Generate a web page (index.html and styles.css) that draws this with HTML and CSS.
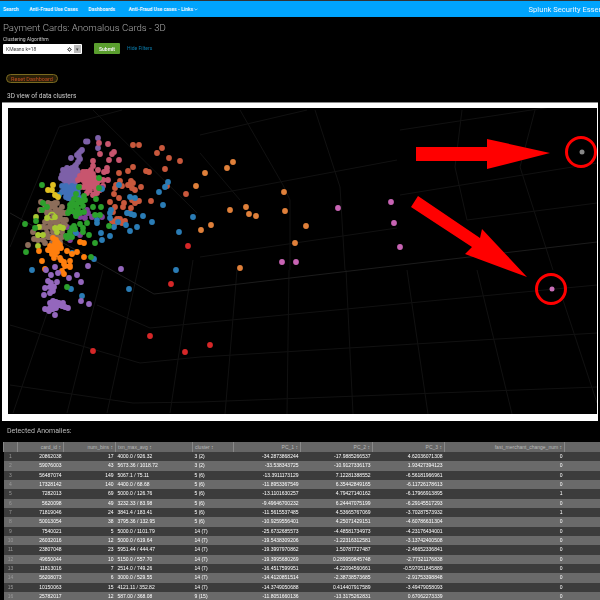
FILE: index.html
```html
<!DOCTYPE html>
<html>
<head lang="en">
    <meta charset="UTF-8">
    <title>Payment Cards: Anomalous Cards - 3D</title>
    <link rel="stylesheet" href="styles.css">
</head>
<body>
<div class="nav">
    <a>Search</a>
    <a>Anti-Fraud Use Cases</a>
    <a>Dashboards</a>
    <a>Anti-Fraud Use cases - Links <svg class="caret" viewBox="0 0 6 4"><path d="M.7.7 3 3 5.3.7"/></svg></a>
    <span class="brand">Splunk Security Essentials</span>
</div>
<h1 class="title">Payment Cards: Anomalous Cards - 3D</h1>
<div class="filters">
    <div class="field">
        <label>Clustering Algorithm</label>
        <div class="select">
            <span class="select-text">KMeans k=18</span>
            <svg class="gear" viewBox="0 0 10 10"><circle cx="5" cy="5" r="2.6"/><path d="M5 .5v2M5 7.500v2M.5 5h2M7.500 5h2M1.800 1.800l1.400 1.400M6.800 6.800l1.400 1.400M1.800 8.200l1.400-1.400M6.800 3.200l1.400-1.400"/></svg>
            <span class="select-arrow">▾</span>
        </div>
    </div>
    <button class="submit">Submit</button>
    <a class="hide">Hide Filters</a>
</div>
<button class="reset">Reset Dashboard</button>
<h2 class="panel-title">3D view of data clusters</h2>
<div class="plot-frame">
    <svg class="plot" viewBox="8 108 589 306">
        <g class="grid">
            <path d="M122 110 59 127 10 247M93 110 197 213M240 110 283 185 290 200 290 270M315 110 340 187 345 270M462 110 455 167 467 220M535 110 520 167 553 270"/>
            <path d="M200 135 307 110M200 197 397 160M200 257 397 228M400 195 597 163M467 220 597 203M400 130 597 100M200 153 240 200"/>
            <path d="M97 305 150 328 200 323 597 285M10 325 140 363 200 357 597 333M10 385 133 403 200 402 597 387"/>
            <path d="M13 413 47 313M67 413 103 270M107 413 140 260M170 413 193 260M225 414 237 270M287 414 289 270M353 414 346 270M428 414 407 270M512 414 477 270M597 403 563 300"/>
            <path class="axis" d="M10 213 154 294 597 242"/>
        </g>
        <path class="pts" stroke="#7d60a8" d="M86 141.500h0M87.500 141.500h0M98 138h0M98 148h0M81 151h0M79 153h0M71 158h0M78 162h0M80 159h0M76 165h0M67 168h0M65 172h0M62 175h0M70 173h0M73 177h0M68 178h0M72 172h0M77 170h0M65 177h0M75 182h0M67 182h0M70 185h0M63 170h0M74 187h0M72 168h0M66 175h0M77 176h0M64 173h0M67 172h0M70 170h0M73 170h0M75 173h0M68 175h0M71 176h0M74 175h0M64 180h0M68 180h0M72 180h0M76 180h0M70 182h0M73 184h0M66 184h0M61 178h0M78 172h0M75 166h0M79 157h0M77 155h0M82 150h0"/>
        <path class="pts" stroke="#c8556e" d="M99 143h0M108 144h0M114 152h0M112 154h0M109 160h0M100 154h0M93 161h0M119 160h0M93 166h0M98 170h0M107 168h0M107 171h0M83 172h0M87 173h0M80 176h0M89 175h0M83 180h0M93 174h0M103 180h0M108 180h0M97 183h0M92 183h0M85 183h0M80 187h0M88 188h0M93 195h0M100 190h0M103 186h0M87 193h0M97 193h0M90 190h0M78 180h0M85 176h0M95 178h0M85 172h0M90 178h0M88 180h0M92 178h0M88 184h0M94 186h0M98 187h0M96 190h0M91 187h0M84 187h0M82 178h0M88 172h0M91 170h0M100 180h0M104 172h0"/>
        <path class="pts" stroke="#c9583c" d="M133 145h0M139 145h0M157 153h0M162 148h0M169 158h0M180 161h0M119 173h0M128 171h0M133 167h0M146 171h0M149 172h0M165 169h0M167 186h0M186 194h0M120 181h0M131 181h0M116 185h0M115 188h0M122 186h0M133 183h0M141 187h0M128 185h0M132 188h0M135 190h0M114 194h0M119 198h0M110 202h0M151 201h0M124 203h0M132 200h0M139 201h0M135 203h0M115 207h0M123 207h0M131 208h0M113 212h0M128 213h0M117 219h0M120 219h0M125 221h0M112 221h0M115 223h0M122 223h0"/>
        <path class="pts" stroke="#4070b8" d="M66 186h0M70 188h0M74 190h0M66 192h0M70 194h0M75 196h0M68 198h0M72 200h0M78 193h0M64 189h0M80 198h0M62 186h0M72 186h0M76 187h0M62 192h0M66 197h0M70 198h0M74 194h0M78 189h0M72 192h0M68 190h0"/>
        <path class="pts" stroke="#7d3f98" d="M75 213h0M80 217h0M88 213h0M92 217h0M102 217h0M87 210h0M67 227h0M75 232h0M80 235h0M70 240h0M85 218h0M102 188h0"/>
        <path class="pts" stroke="#2a7cb5" d="M168 182h0M165 187h0M159 192h0M163 205h0M193 217h0M179 232h0M152 222h0M143 216h0M137 227h0M130 231h0M126 225h0M114 227h0M110 236h0M101 233h0M102 240h0M111 210h0M110 213h0M119 185h0M130 197h0M135 198h0M127 213h0M131 214h0M134 215h0M110 218h0M97 220h0M97 223h0M118 222h0M72 253h0M94 259h0M76 233h0M59 195h0M102 189h0M32 270h0M176 270h0M129 289h0M71 289h0M82 296h0"/>
        <path class="pts" stroke="#8c6d5a" d="M41 202h0M50 207h0M57 203h0M62 207h0M53 213h0M60 215h0M63 220h0M50 222h0M57 225h0M62 232h0M58 237h0M53 232h0M47 233h0M43 240h0M48 237h0M33 232h0M28 245h0M34 239h0M58 220h0M65 213h0M55 208h0M47 213h0M60 242h0M52 243h0M56 210h0M60 210h0M53 217h0M48 218h0M45 205h0M48 203h0M52 204h0M55 203h0M45 210h0M50 212h0M58 212h0M62 213h0M45 222h0M50 226h0M46 228h0M54 222h0M60 225h0M65 225h0M42 227h0M55 235h0M50 237h0M45 243h0M38 240h0M52 228h0M62 237h0M66 220h0M40 210h0"/>
        <path class="pts" stroke="#a8c832" d="M36 217h0M55 217h0M47 218h0M39 227h0M55 228h0M60 227h0M38 235h0M38 246h0M57 232h0M63 228h0M43 235h0"/>
        <circle class="ring" cx="52" cy="216" r="3.500"/>
        <path class="pts" stroke="#e0c020" d="M53 185h0M48 190h0M52 190h0M55 195h0M58 197h0"/>
        <path class="pts" stroke="#2ca02c" d="M42 185h0M99 178h0M79 187h0M99 188h0M76 194h0M84 196h0M96 199h0M72 203h0M80 202h0M83 206h0M70 208h0M75 212h0M80 213h0M93 207h0M101 207h0M95 215h0M100 215h0M87 223h0M74 226h0M83 228h0M70 232h0M89 235h0M67 238h0M72 237h0M95 243h0M91 257h0M109 226h0M26 252h0M25 224h0M36 221h0M43 203h0M42 210h0M47 207h0M35 228h0M83 232h0M67 287h0M73 206h0M78 209h0M68 213h0M75 205h0M70 205h0M72 211h0M77 207h0M82 201h0M85 200h0M78 200h0M74 199h0M69 211h0M76 216h0M84 212h0M66 236h0M70 235h0M75 229h0M80 224h0M72 228h0"/>
        <path class="pts" stroke="#ff7f0e" d="M39 251h0M42 261h0M50 250h0M52 254h0M55 255h0M60 258h0M64 262h0M70 261h0M67 251h0M72 254h0M77 252h0M84 257h0M80 242h0M84 243h0M53 238h0M55 243h0M57 248h0M52 247h0M58 243h0M65 266h0M70 266h0M45 269h0M61 248h0M61 260h0M64 264h0M70 267h0M62 271h0M64 274h0M55 247h0M53 251h0M50 246h0M57 252h0M54 258h0M48 250h0M60 245h0M56 240h0"/>
        <path class="pts" stroke="#9467bd" d="M46 270h0M51 275h0M58 273h0M55 267h0M48 281h0M51 283h0M57 282h0M69 278h0M77 275h0M81 282h0M88 266h0M121 269h0M45 288h0M50 287h0M54 287h0M53 291h0M50 293h0M44 295h0M81 301h0M89 304h0M45 309h0M49 311h0M55 315h0M68 308h0M65 307h0M63 303h0M50 303h0M53 301h0M56 302h0M59 303h0M51 306h0M54 306h0M57 305h0M60 305h0M53 309h0M56 308h0M50 308h0M62 306h0"/>
        <path class="pts" stroke="#d62728" d="M188 246h0M171 284h0M150 336h0M185 352h0M93 351h0M210 345h0"/>
        <path class="pts" stroke="#e0803a" d="M233 162h0M227 168h0M205 173h0M284 192h0M246 207h0M230 210h0M249 214h0M256 216h0M285 211h0M211 225h0M201 230h0M306 226h0M295 243h0M240 268h0M196 186h0"/>
        <path class="pts" stroke="#c864b4" d="M338 208h0M391 202h0M394 223h0M400 247h0M282 262h0M296 262h0"/>
        <path class="pts small" stroke="#888888" d="M582 152h0"/>
        <path class="pts small" stroke="#c86fb8" d="M552 289h0"/>
        <g class="mark">
            <polygon points="416,147 487,147 487,139 550,153 487,169 487,161 416,161"/>
            <polygon points="418,196 480,238 482,229 527,277 465,254 472,247 411,207"/>
            <circle cx="581" cy="152" r="14.500"/>
            <circle cx="551" cy="289" r="14.500"/>
        </g>
    </svg>
</div>
<h2 class="table-title">Detected Anomalies:</h2>
<table class="results">
    <colgroup>
        <col class="c-row"><col class="c-id"><col class="c-bins"><col class="c-txn"><col class="c-cluster"><col class="c-pc1"><col class="c-pc"><col class="c-pc"><col class="c-fast"><col>
    </colgroup>
    <thead>
        <tr>
            <th></th>
            <th>card_id ↕</th>
            <th>num_bins ↕</th>
            <th class="left">txn_max_avg ↕</th>
            <th class="left">cluster ↕</th>
            <th>PC_1 ↕</th>
            <th>PC_2 ↕</th>
            <th>PC_3 ↕</th>
            <th>fast_merchant_change_num ↕</th>
            <th></th>
        </tr>
    </thead>
    <tbody>
        <tr><td class="num">1</td><td>20862038</td><td>17</td><td class="left">4000.0 / 926.32</td><td class="left">3 (2)</td><td>-34.2873868244</td><td>-17.9885266537</td><td>4.62036071308</td><td>0</td><td></td></tr>
        <tr><td class="num">2</td><td>59076003</td><td>43</td><td class="left">5673.36 / 1018.72</td><td class="left">3 (2)</td><td>-33.538343725</td><td>-10.9127336173</td><td>1.93427394123</td><td>0</td><td></td></tr>
        <tr><td class="num">3</td><td>56487074</td><td>149</td><td class="left">5067.1 / 75.11</td><td class="left">5 (6)</td><td>-13.3911173129</td><td>7.12281388552</td><td>-6.56181966961</td><td>0</td><td></td></tr>
        <tr><td class="num">4</td><td>17328142</td><td>140</td><td class="left">4400.0 / 68.68</td><td class="left">5 (6)</td><td>-11.8953367549</td><td>6.35442849165</td><td>-6.11726178613</td><td>0</td><td></td></tr>
        <tr><td class="num">5</td><td>7282013</td><td>69</td><td class="left">5000.0 / 126.76</td><td class="left">5 (6)</td><td>-13.1101630257</td><td>4.79427140162</td><td>-6.17966913895</td><td>1</td><td></td></tr>
        <tr><td class="num">6</td><td>5620098</td><td>49</td><td class="left">3232.33 / 83.98</td><td class="left">5 (6)</td><td>-9.49646700232</td><td>6.24447075199</td><td>-6.29145517293</td><td>0</td><td></td></tr>
        <tr><td class="num">7</td><td>71819046</td><td>24</td><td class="left">3841.4 / 183.41</td><td class="left">5 (6)</td><td>-11.5615537485</td><td>4.53665767069</td><td>-3.70287573932</td><td>1</td><td></td></tr>
        <tr><td class="num">8</td><td>50013054</td><td>38</td><td class="left">3795.36 / 132.95</td><td class="left">5 (6)</td><td>-10.9259556401</td><td>4.25071429151</td><td>-4.60786631304</td><td>0</td><td></td></tr>
        <tr><td class="num">9</td><td>7540021</td><td>5</td><td class="left">5000.0 / 1101.79</td><td class="left">14 (7)</td><td>-25.6732685573</td><td>-4.48581734973</td><td>-4.23176434001</td><td>0</td><td></td></tr>
        <tr><td class="num">10</td><td>26032016</td><td>12</td><td class="left">5000.0 / 619.64</td><td class="left">14 (7)</td><td>-19.5438309206</td><td>-1.22316312581</td><td>-3.13742400508</td><td>0</td><td></td></tr>
        <tr><td class="num">11</td><td>23807048</td><td>23</td><td class="left">5951.44 / 444.47</td><td class="left">14 (7)</td><td>-19.3997970862</td><td>1.50787727487</td><td>-2.46652336841</td><td>0</td><td></td></tr>
        <tr><td class="num">12</td><td>49650044</td><td>10</td><td class="left">5150.0 / 557.70</td><td class="left">14 (7)</td><td>-19.3995680269</td><td>0.289959845748</td><td>-2.77321176838</td><td>0</td><td></td></tr>
        <tr><td class="num">13</td><td>11813016</td><td>7</td><td class="left">2514.0 / 749.26</td><td class="left">14 (7)</td><td>-16.4517599951</td><td>-4.22094560661</td><td>-0.597051845889</td><td>0</td><td></td></tr>
        <tr><td class="num">14</td><td>56208073</td><td>6</td><td class="left">3000.0 / 529.55</td><td class="left">14 (7)</td><td>-14.4120851514</td><td>-2.38738573685</td><td>-2.91753398848</td><td>0</td><td></td></tr>
        <tr><td class="num">15</td><td>10150063</td><td>15</td><td class="left">4121.11 / 352.82</td><td class="left">14 (7)</td><td>-14.3749050688</td><td>0.414407917589</td><td>-3.49479058093</td><td>0</td><td></td></tr>
        <tr><td class="num">16</td><td>25782017</td><td>12</td><td class="left">587.00 / 368.08</td><td class="left">9 (15)</td><td>-11.8051660136</td><td>-13.3175262831</td><td>0.67062273339</td><td>0</td><td></td></tr>
    </tbody>
</table>
</body>
</html>
```

FILE: styles.css
```css
*{
    margin:0;
    padding:0;
    box-sizing:border-box;
}
html,body{
    height:600px;
    overflow:hidden;
}
body{
    background:#000;
    color:#ccc;
    font-family:"Roboto","Liberation Sans",sans-serif;
}
.nav{
    height:17px;
    border-top:1px solid #333;
    background:#00a4fd;
    display:flex;
    align-items:center;
    gap:10.500px;
    padding-left:3px;
    white-space:nowrap;
    font-size:5px;
    font-weight:700;
    color:#e8f6ff;
}
.nav a:nth-child(4){
    margin-left:3px;
}
.caret{
    width:4px;
    height:3px;
    fill:none;
    stroke:#e8f6ff;
    stroke-width:1;
}
.brand{
    margin-left:auto;
    margin-right:-17px;
    font-size:7.600px;
    font-weight:400;
}
.title{
    font-size:9.600px;
    font-weight:300;
    color:#aaa;
    margin:4.500px 0 0 3px;
    line-height:12px;
}
.filters{
    display:flex;
    align-items:flex-end;
    margin:2.500px 0 0 3px;
}
.field label{
    display:block;
    font-size:5px;
    line-height:6px;
    color:#ccc;
    margin-bottom:2px;
}
.select{
    width:79px;
    height:10px;
    background:#fff;
    border-radius:1px;
    display:flex;
    align-items:center;
    padding-left:3px;
    font-size:5px;
    color:#444;
}
.select-text{
    flex:1;
}
.gear{
    width:5px;
    height:5px;
    fill:none;
    stroke:#333;
    stroke-width:1.500;
}
.select-arrow{
    width:7px;
    height:8px;
    margin:0 1px 0 2px;
    background:#bbb;
    text-align:center;
    line-height:8px;
}
.submit{
    width:26px;
    height:11px;
    margin-left:12px;
    border:none;
    border-radius:1px;
    background:#5a9e2e;
    color:#eee;
    font:700 5px "Roboto","Liberation Sans",sans-serif;
}
.hide{
    margin:0 0 3px 7px;
    font-size:5px;
    color:#0a7bab;
}
.reset{
    display:block;
    width:52px;
    height:9px;
    margin:20px 0 0 6px;
    border:1px solid #7a6a20;
    border-radius:5px;
    background:#2a2008;
    color:#c04a20;
    font:5.500px "Roboto","Liberation Sans",sans-serif;
}
.panel-title{
    font-size:6.500px;
    font-weight:400;
    line-height:8px;
    margin:9px 0 0 7px;
    color:#ccc;
}
.nav,.title,.filters,.reset,.panel-title,.table-title,.results{
    filter:blur(.3px);
}
.plot-frame{
    margin:2px 2px 0 2px;
    height:319px;
    border-top:1px solid #888;
    background:#fff;
    padding:5px 1px 6px 6px;
}
.plot{
    display:block;
    width:589px;
    height:306px;
    background:#000;
}
.grid path{
    fill:none;
    stroke:#111;
    stroke-width:1;
}
.grid .axis{
    stroke:#1c1c1c;
}
.pts{
    fill:none;
    stroke-width:5.800;
    stroke-linecap:round;
}
.pts.small{
    stroke-width:5;
}
.ring{
    fill:none;
    stroke:#a8c832;
    stroke-width:1.500;
}
.mark polygon{
    fill:#f00;
}
.mark circle{
    fill:none;
    stroke:#f00;
    stroke-width:3;
}
.table-title{
    font-size:7px;
    font-weight:400;
    line-height:9px;
    margin:6px 0 6px 7px;
    color:#bbb;
}
.results{
    margin-left:3px;
    width:597px;
    table-layout:fixed;
    border-collapse:collapse;
    font-family:"Liberation Sans",sans-serif;
    font-size:5px;
    color:#fff;
}
.c-row{width:14px;}
.c-id{width:46px;}
.c-bins{width:52px;}
.c-txn{width:77px;}
.c-cluster{width:41px;}
.c-pc1{width:67px;}
.c-pc{width:72px;}
.c-fast{width:120px;}
.results th{
    height:10px;
    background:#666;
    color:#bbb;
    font-weight:400;
    text-align:right;
    padding:0 2px;
    border-left:1px solid #888;
    white-space:nowrap;
}
.results td{
    height:9.330px;
    padding:0 2px;
    text-align:right;
    white-space:nowrap;
    overflow:hidden;
    line-height:5px;
}
.results tbody tr:nth-child(odd){
    background:#3c3c3c;
}
.results tbody tr:nth-child(even){
    background:#6a6a6a;
}
.results .left{
    text-align:left;
}
.results .num{
    text-align:center;
    color:#999;
}
```
